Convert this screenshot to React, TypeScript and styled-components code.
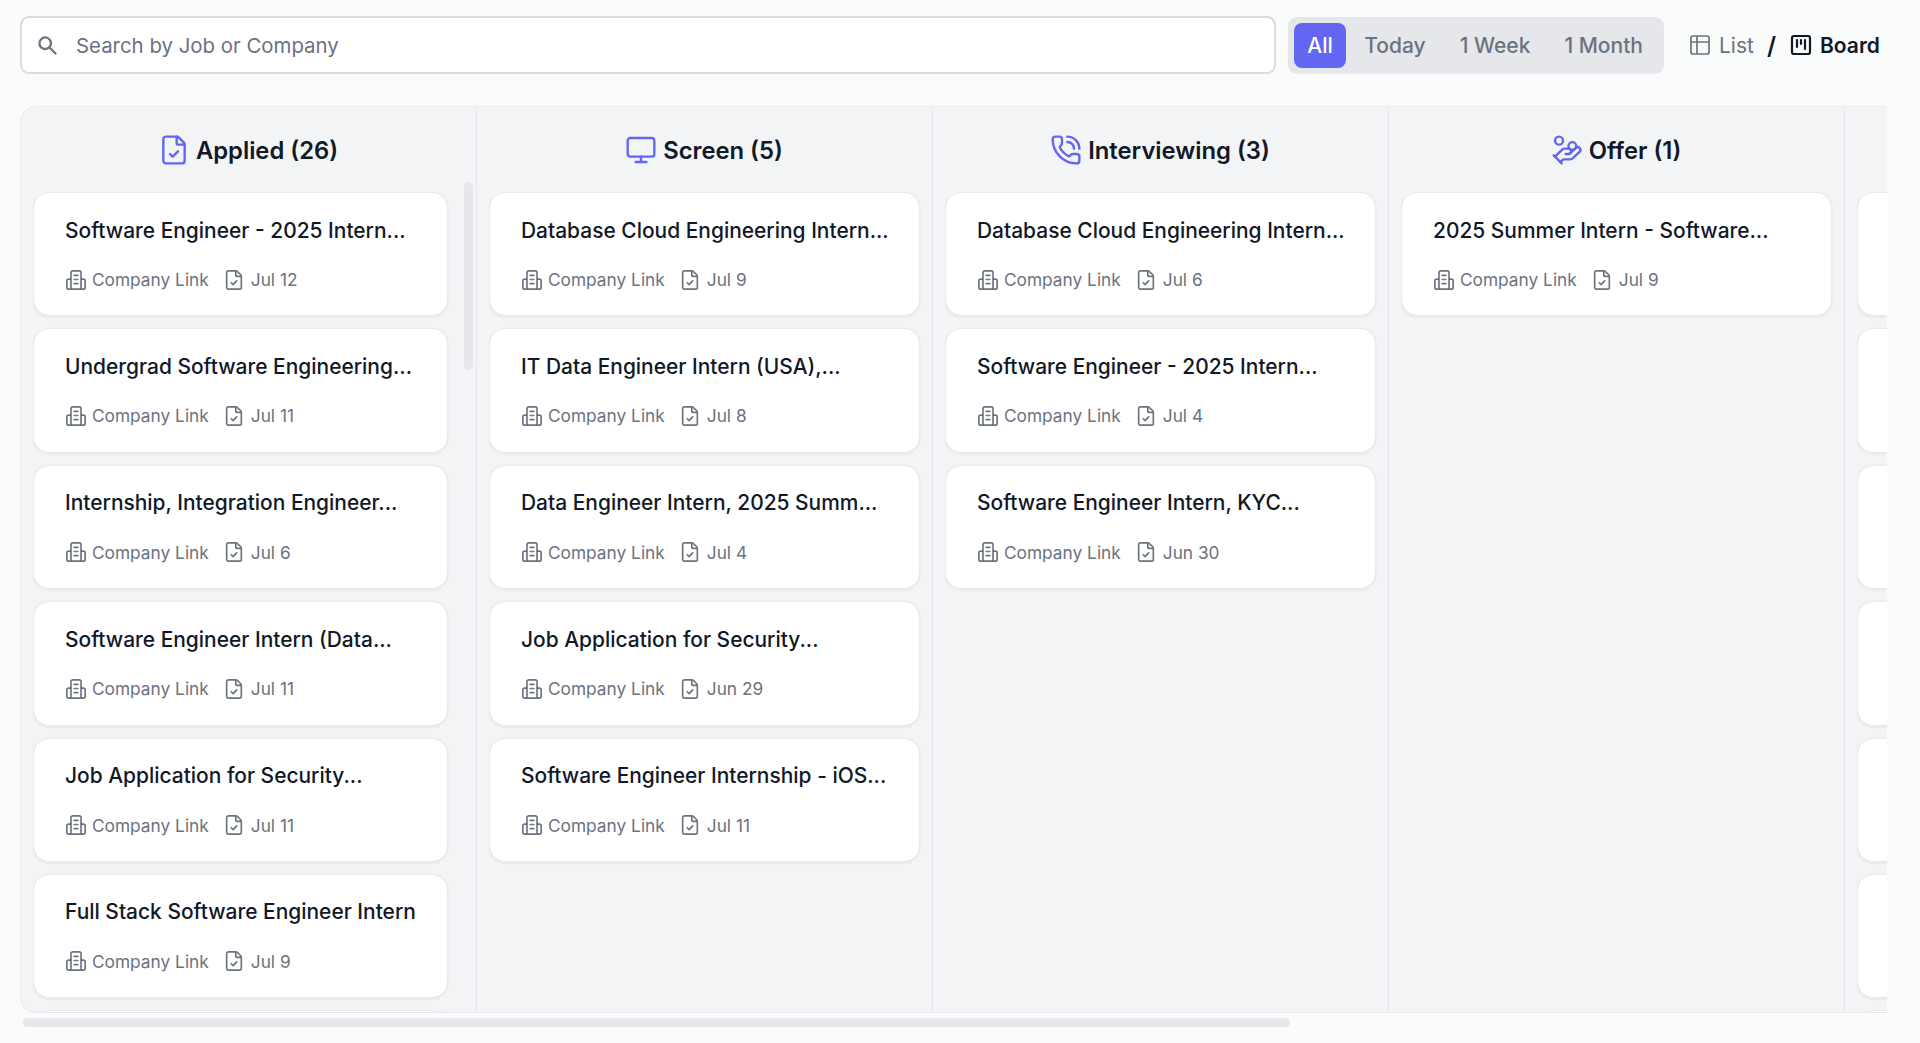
import { FileCheck, HandCoins, Monitor, PhoneCall, SquareKanban, Table2 } from 'lucide-react';
import { HiSearch } from 'react-icons/hi';
import styled, { createGlobalStyle } from 'styled-components';

interface JobT {
  title: string;
  date: string;
}

interface ColumnT {
  name: string;
  icon?: React.ReactNode;
  jobs: JobT[];
  // cards that are scrolled or clipped so that none of their text shows
  blanks: number;
  scroll?: boolean;
}

const CompanyIcon = () => (
  <svg width="22" height="22" viewBox="0 0 24 24" fill="none" stroke="currentColor" strokeWidth="1.8" strokeLinecap="round" strokeLinejoin="round">
    <path d="M6.500 22V4a2 2 0 0 1 2-2h7a2 2 0 0 1 2 2v18" />
    <path d="M6.500 11H4a2 2 0 0 0-2 2v7a2 2 0 0 0 2 2h16a2 2 0 0 0 2-2v-7a2 2 0 0 0-2-2h-2.500" />
    <path d="M10 7h4M10 11.500h4M10 16h4" />
  </svg>
);

const applied: JobT[] = [
  { title: 'Software Engineer - 2025 Intern...', date: 'Jul 12' },
  { title: 'Undergrad Software Engineering...', date: 'Jul 11' },
  { title: 'Internship, Integration Engineer...', date: 'Jul 6' },
  { title: 'Software Engineer Intern (Data...', date: 'Jul 11' },
  { title: 'Job Application for Security...', date: 'Jul 11' },
  { title: 'Full Stack Software Engineer Intern', date: 'Jul 9' },
];

const screen: JobT[] = [
  { title: 'Database Cloud Engineering Intern...', date: 'Jul 9' },
  { title: 'IT Data Engineer Intern (USA),...', date: 'Jul 8' },
  { title: 'Data Engineer Intern, 2025 Summ...', date: 'Jul 4' },
  { title: 'Job Application for Security...', date: 'Jun 29' },
  { title: 'Software Engineer Internship - iOS...', date: 'Jul 11' },
];

const interviewing: JobT[] = [
  { title: 'Database Cloud Engineering Intern...', date: 'Jul 6' },
  { title: 'Software Engineer - 2025 Intern...', date: 'Jul 4' },
  { title: 'Software Engineer Intern, KYC...', date: 'Jun 30' },
];

const offer: JobT[] = [{ title: '2025 Summer Intern - Software...', date: 'Jul 9' }];

const columns: ColumnT[] = [
  { name: 'Applied (26)', icon: <FileCheck size={32} strokeWidth={1.8} />, jobs: applied, blanks: 1, scroll: true },
  { name: 'Screen (5)', icon: <Monitor size={32} strokeWidth={1.8} />, jobs: screen, blanks: 0 },
  { name: 'Interviewing (3)', icon: <PhoneCall size={32} strokeWidth={1.8} />, jobs: interviewing, blanks: 0 },
  { name: 'Offer (1)', icon: <HandCoins size={32} strokeWidth={1.8} />, jobs: offer, blanks: 0 },
  { name: '', jobs: [], blanks: 7 },
];

const filters = ['All', 'Today', '1 Week', '1 Month'];

const JobCard: React.FC<{ job: JobT }> = ({ job }) => (
  <Card>
    <Title>{job.title}</Title>
    <Meta>
      <MetaItem>
        <CompanyIcon />
        Company Link
      </MetaItem>
      <MetaItem>
        <FileCheck size={22} strokeWidth={1.8} />
        {job.date}
      </MetaItem>
    </Meta>
  </Card>
);

const App = () => {
  return (
    <Page>
      <GlobalStyle />
      <Toolbar>
        <SearchBox>
          <HiSearch size={23} color="#6b7280" />
          <SearchInput placeholder="Search by Job or Company" readOnly />
        </SearchBox>
        <Filters>
          {filters.map(f => (
            <Filter key={f} active={f === 'All'}>
              {f}
            </Filter>
          ))}
        </Filters>
        <ViewSwitch>
          <ViewOption>
            <Table2 size={24} strokeWidth={1.7} />
            List
          </ViewOption>
          <Slash>/</Slash>
          <ViewOption active>
            <SquareKanban size={24} strokeWidth={2.2} />
            Board
          </ViewOption>
        </ViewSwitch>
      </Toolbar>
      <Board>
        {columns.map((col, c) => (
          <Column key={c}>
            <ColumnHeader>
              <HeaderIcon>{col.icon}</HeaderIcon>
              {col.name}
            </ColumnHeader>
            <ColumnBody>
              <CardList>
                {col.jobs.map((job, i) => (
                  <JobCard key={i} job={job} />
                ))}
                {Array.from({ length: col.blanks }, (_, i) => (
                  <Card key={i} />
                ))}
              </CardList>
              {col.scroll && (
                <ScrollRail>
                  <ScrollThumb />
                </ScrollRail>
              )}
            </ColumnBody>
          </Column>
        ))}
      </Board>
      <HScroll>
        <HThumb />
      </HScroll>
    </Page>
  );
};

export default App;

const GlobalStyle = createGlobalStyle`
  html, body {
    margin: 0;
    padding: 0;
    background: #fafbfb;
    overflow: hidden;
  }
  * {
    box-sizing: border-box;
  }
`;
const Page = styled.div`
  width: 1920px;
  height: 1043px;
  padding: 16px 33px 0 20px;
  font-family: Inter, 'Liberation Sans', sans-serif;
  color: #111827;
`;
const Toolbar = styled.div`
  display: flex;
  align-items: center;
  height: 58px;
`;
const SearchBox = styled.div`
  flex: 1;
  height: 58px;
  display: flex;
  align-items: center;
  gap: 15px;
  padding: 0 14px;
  background: #fff;
  border: 2px solid #d9dce1;
  border-radius: 9px;
`;
const SearchInput = styled.input`
  flex: 1;
  border: none;
  outline: none;
  background: transparent;
  font-family: inherit;
  font-size: 20.4px;
  color: #111827;
  &::placeholder {
    color: #6b7280;
    opacity: 1;
  }
`;
const Filters = styled.div`
  display: flex;
  align-items: center;
  gap: 2px;
  height: 57px;
  margin-left: 12px;
  padding: 0 5px 0 6px;
  background: #e5e7eb;
  border-radius: 9px;
`;
const Filter = styled.div<{ active?: boolean }>`
  height: 45px;
  display: flex;
  align-items: center;
  padding: 0 ${props => (props.active ? '13.5px' : '16px')};
  border-radius: 8px;
  font-size: 21px;
  font-weight: 500;
  color: ${props => (props.active ? '#fff' : '#6b7280')};
  background: ${props => (props.active ? '#6366f1' : 'transparent')};
`;
const ViewSwitch = styled.div`
  flex: none;
  display: flex;
  align-items: center;
  gap: 13px;
  margin-left: 24px;
  width: 199px;
`;
const ViewOption = styled.div<{ active?: boolean }>`
  display: flex;
  align-items: center;
  gap: 7px;
  font-size: 21px;
  font-weight: ${props => (props.active ? 600 : 400)};
  color: ${props => (props.active ? '#111827' : '#6b7280')};
`;
const Slash = styled.div`
  font-size: 24px;
  font-weight: 600;
  color: #111827;
`;
const Board = styled.div`
  display: flex;
  height: 907px;
  margin-top: 32px;
  background: #f3f4f6;
  border: 1px solid #e8eaed;
  border-right: none;
  border-radius: 16px 0 0 16px;
  overflow: hidden;
`;
const Column = styled.div`
  flex: none;
  width: 456px;
  display: flex;
  flex-direction: column;
  border-right: 1px solid #e5e7eb;
`;
const ColumnHeader = styled.div`
  flex: none;
  height: 85px;
  padding-top: 1px;
  display: flex;
  align-items: center;
  justify-content: center;
  gap: 6px;
  font-size: 23.8px;
  font-weight: 600;
`;
const HeaderIcon = styled.span`
  display: flex;
  margin-left: -1px;
  color: #6366f1;
`;
const ColumnBody = styled.div`
  flex: 1;
  min-height: 0;
  display: flex;
  padding-left: 12px;
`;
const CardList = styled.div`
  flex: 1;
  min-width: 0;
  display: flex;
  flex-direction: column;
  gap: 12px;
  padding-right: 12px;
  overflow: hidden;
`;
const ScrollRail = styled.div`
  flex: none;
  width: 16px;
  padding-left: 4px;
  margin-top: -10px;
`;
const ScrollThumb = styled.div`
  width: 9px;
  height: 188px;
  background: #e5e7eb;
  border-radius: 5px;
`;
const Card = styled.div`
  flex: none;
  height: 124.4px;
  padding: 24.5px 31px 0;
  background: #fff;
  border: 1px solid #e8eaed;
  border-radius: 16px;
  box-shadow: 0 1px 3px rgba(17, 24, 39, 0.08);
`;
const Title = styled.div`
  height: 26px;
  line-height: 26px;
  font-size: 20.95px;
  font-weight: 500;
  color: #111827;
  white-space: nowrap;
`;
const Meta = styled.div`
  display: flex;
  align-items: center;
  gap: 14px;
  margin-top: 25px;
  font-size: 17.3px;
  color: #6b7280;
`;
const MetaItem = styled.div`
  display: flex;
  align-items: center;
  gap: 5px;
  & + & {
    gap: 6px;
  }
`;
const HScroll = styled.div`
  height: 9px;
  margin: 5px 0 0 3px;
`;
const HThumb = styled.div`
  width: 1267px;
  height: 100%;
  background: #e5e7eb;
  border-radius: 5px;
`;
